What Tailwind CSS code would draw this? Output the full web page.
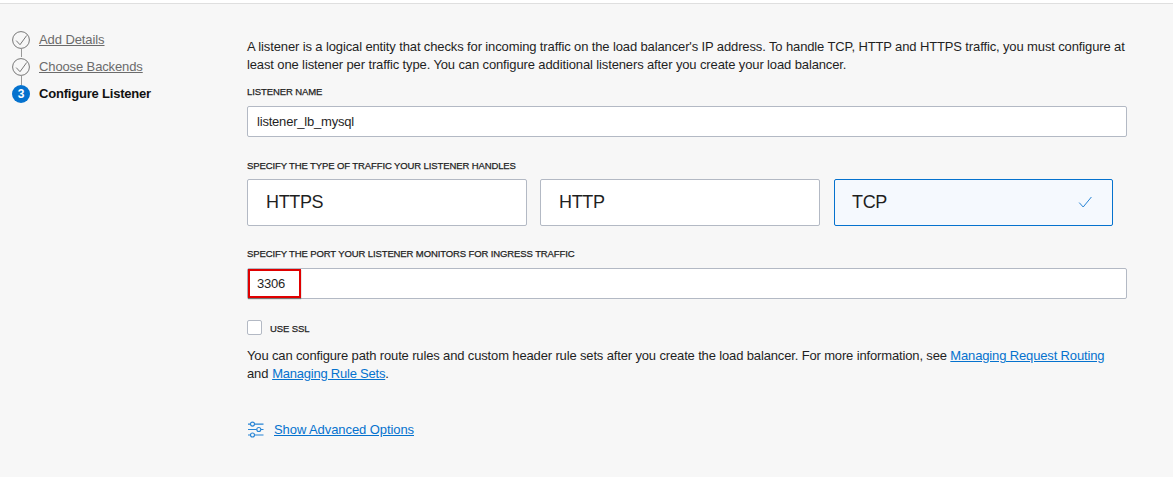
<!DOCTYPE html>
<html lang="en">
<head>
<meta charset="utf-8">
<title>Configure Listener</title>
<script src="https://cdn.jsdelivr.net/npm/@tailwindcss/browser@4"></script>
</head>
<body class="h-[477px] overflow-hidden bg-[#f7f7f7] font-['Liberation_Sans',Arial,sans-serif] text-[13px] leading-[18px] text-[#1f1f1f]">
<div class="h-1 border-b border-[#dfdfdf] bg-white"></div>
<div class="flex">
  <nav class="w-[247px] shrink-0 pl-3 pt-[26px]">
    <ol>
      <li class="flex h-[27px] items-start">
        <svg class="h-[27px] w-[18px] shrink-0" viewBox="0 0 18 27" fill="none" stroke="#777" stroke-width="1"><circle cx="9" cy="10" r="8.4"/><path d="M4.2 10.6l3.8 4.1 6.7-9.2"/><path stroke="#999" d="M9.5 18.5V27"/></svg>
        <a class="ml-[9px] mt-px whitespace-nowrap tracking-[-0.09px] text-[#6b6b6b] underline underline-offset-1"><span>Add Details</span></a>
      </li>
      <li class="flex h-[27px] items-start">
        <svg class="h-[27px] w-[18px] shrink-0 overflow-visible" viewBox="0 0 18 27" fill="none" stroke="#777" stroke-width="1"><circle cx="9" cy="10" r="8.4"/><path d="M4.2 10.6l3.8 4.1 6.7-9.2"/><path stroke="#999" d="M9.5 18.5V28"/></svg>
        <a class="ml-[9px] mt-px whitespace-nowrap tracking-[-0.12px] text-[#6b6b6b] underline underline-offset-1"><span>Choose Backends</span></a>
      </li>
      <li class="flex items-start">
        <span class="mt-px flex size-[18px] shrink-0 items-center justify-center rounded-full bg-[#0572ce] text-xs font-bold text-white">3</span>
        <span class="ml-[9px] mt-px whitespace-nowrap font-bold tracking-[-0.2px] text-[#111]">Configure Listener</span>
      </li>
    </ol>
  </nav>
  <main class="w-[880px] pt-[34px]">
    <p class="whitespace-nowrap tracking-[-0.125px]"><span>A listener is a logical entity that checks for incoming traffic on the load balancer's IP address. To handle TCP, HTTP and HTTPS traffic, you must configure at</span><br><span>least one listener per traffic type. You can configure additional listeners after you create your load balancer.</span></p>
    <div class="mt-[11px] h-[21px] text-[9.5px] leading-[14px] tracking-[-0.1px] [-webkit-text-stroke:0.25px_#1f1f1f]"><span>LISTENER NAME</span></div>
    <div class="flex h-[31px] items-center rounded-[2px] border border-[#b3b9c4] bg-white px-[9px] tracking-[-0.2px]"><span>listener_lb_mysql</span></div>
    <div class="mt-[22px] h-5 text-[9.5px] leading-[14px] tracking-[-0.11px] [-webkit-text-stroke:0.25px_#1f1f1f]"><span>SPECIFY THE TYPE OF TRAFFIC YOUR LISTENER HANDLES</span></div>
    <div class="flex gap-[13px] text-lg tracking-[-0.35px]">
      <div class="flex h-[47px] w-[280px] items-center rounded-[2px] border border-[#b3b9c4] bg-white pb-0.5 pl-[18px]"><span>HTTPS</span></div>
      <div class="flex h-[47px] w-[280px] items-center rounded-[2px] border border-[#b3b9c4] bg-white pb-0.5 pl-[18px]"><span>HTTP</span></div>
      <div class="ml-px flex h-[47px] w-[279px] items-center justify-between rounded-[2px] border border-[#0572ce] bg-[#f5f9fe] pb-0.5 pl-[17px] pr-5"><span>TCP</span>
        <svg class="mt-px h-3 w-[14px]" viewBox="0 0 14 12" fill="none" stroke="#2684d5"><path d="M1.2 6.6l4 4.4L13.4 1"/></svg>
      </div>
    </div>
    <div class="mt-[21px] h-[21px] text-[9.5px] leading-[14px] tracking-[-0.11px] [-webkit-text-stroke:0.25px_#1f1f1f]"><span>SPECIFY THE PORT YOUR LISTENER MONITORS FOR INGRESS TRAFFIC</span></div>
    <div class="relative flex h-[31px] items-center rounded-[2px] border border-[#b3b9c4] bg-white px-[9px] tracking-[-0.2px]"><span>3306</span>
      <div class="absolute left-0 top-0 h-[29px] w-[53px] border-2 border-[#e00000] shadow-[0_1px_1px_#777]"></div>
    </div>
    <div class="mt-[21px] flex h-[15px] items-center">
      <div class="size-[15px] rounded-[2px] border border-[#b3b9c4] bg-white"></div>
      <div class="ml-2 mt-0.5 text-[9.5px] leading-[14px] tracking-[-0.1px] [-webkit-text-stroke:0.25px_#1f1f1f]"><span>USE SSL</span></div>
    </div>
    <p class="mt-3 whitespace-nowrap tracking-[-0.145px]"><span>You can configure path route rules and custom header rule sets after you create the load balancer. For more information, see <a class="text-[#0572ce] underline underline-offset-1">Managing Request Routing</a></span><br><span>and <a class="ml-[0.4px] tracking-[-0.22px] text-[#0572ce] underline underline-offset-1">Managing Rule Sets</a>.</span></p>
    <div class="mt-[38px] flex h-[18px] items-center">
      <svg class="h-[18px] w-[18px]" viewBox="0 0 18 18" fill="none" stroke="#2684d5" stroke-width="1.1"><path d="M1 3.1h2.4M7.6 3.1h8.9M1 8.5h8.7M14 8.5h2.5M1 14h2.4M7.6 14h8.9"/><circle cx="5.5" cy="3.1" r="2"/><circle cx="11.8" cy="8.5" r="2"/><circle cx="5.5" cy="14" r="2"/></svg>
      <a class="ml-[9px] tracking-[-0.08px] text-[#0572ce] underline underline-offset-1"><span>Show Advanced Options</span></a>
    </div>
  </main>
</div>
</body>
</html>
